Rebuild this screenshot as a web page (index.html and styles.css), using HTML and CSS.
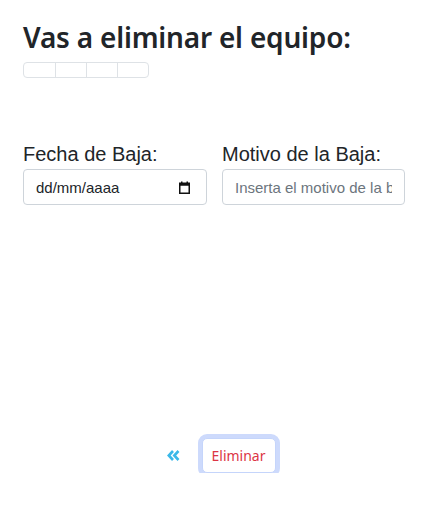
FILE: index.html
```html
<!DOCTYPE html>
<html lang="es">
<head>
<meta charset="utf-8">
<link rel="stylesheet" href="styles.css">
</head>
<body>
<main class="page">
  <h1 class="title">Vas a eliminar el equipo:</h1>
  <table class="equipo">
    <tr><td></td><td></td><td></td><td></td></tr>
  </table>
  <div class="fields">
    <div class="field field-date">
      <label class="label">Fecha de Baja:</label>
      <div class="input date-input">
        <span class="date-text">dd/mm/aaaa</span>
        <svg class="cal-icon" width="11" height="13" viewBox="0 0 11 13">
          <rect x="0.75" y="2.25" width="9.5" height="10" fill="none" stroke="#111" stroke-width="1.5"/>
          <rect x="0.75" y="2.25" width="9.5" height="2.5" fill="#111"/>
          <rect x="2" y="0.5" width="1.5" height="2.5" fill="#111"/>
          <rect x="7.5" y="0.5" width="1.5" height="2.5" fill="#111"/>
        </svg>
      </div>
    </div>
    <div class="field field-text">
      <label class="label">Motivo de la Baja:</label>
      <input class="input text-input" type="text" placeholder="Inserta el motivo de la baja">
    </div>
  </div>
  <div class="actions">
    <a class="back" href="#">
      <svg width="13" height="11" viewBox="0 0 13 11">
        <path d="M6 1 L1.8 5.5 L6 10 M11.5 1 L7.3 5.5 L11.5 10" fill="none" stroke="#3ab8e8" stroke-width="2.6"/>
      </svg>
    </a>
    <button class="btn-delete" type="button">Eliminar</button>
  </div>
</main>
</body>
</html>
```

FILE: styles.css
```css
* { box-sizing: border-box; }
html, body { margin: 0; padding: 0; background: #fff; }
body { font-family: "Noto Sans", "Open Sans", sans-serif; color: #212529; }
.page { padding: 0 23px; }
.title {
  margin: 19px 0 7px;
  font-size: 28px;
  line-height: 36px;
  font-weight: 600;
  letter-spacing: -0.2px;
  color: #212529;
}
.equipo {
  border-collapse: separate;
  border-spacing: 0;
  border: 1px solid #dee2e6;
  border-radius: 4px;
  height: 16px;
}
.equipo td {
  width: 31px;
  height: 14px;
  padding: 0;
  border-left: 1px solid #dee2e6;
}
.equipo td:first-child { border-left: none; }
.fields {
  display: flex;
  gap: 15px;
  margin-top: 64px;
}
.field { display: flex; flex-direction: column; }
.field-date { width: 184px; }
.field-text { width: 183px; }
.label {
  font-family: "Liberation Sans", Arial, sans-serif;
  font-size: 20px;
  line-height: 24px;
  color: #212529;
  margin-bottom: 3px;
  white-space: nowrap;
}
.input {
  height: 36px;
  width: 100%;
  border: 1px solid #ced4da;
  border-radius: 4px;
  padding: 0 12px;
  font-family: "Liberation Sans", Arial, sans-serif;
  font-size: 15px;
  color: #212529;
  background: #fff;
}
.date-input {
  display: flex;
  align-items: center;
  justify-content: space-between;
  padding-right: 16px;
}
.text-input::placeholder { color: #6c757d; }
.text-input { outline: none; }
.actions {
  display: flex;
  align-items: center;
  justify-content: center;
  gap: 22px;
  margin-top: 233px;
  padding-left: 1px;
}
.back { display: flex; align-items: center; text-decoration: none; }
.btn-delete {
  font-family: "Noto Sans", "Open Sans", sans-serif;
  font-size: 14px;
  line-height: 21px;
  height: 35px;
  padding: 0 9px;
  color: #dc3545;
  background: #fff;
  border: 1px solid #c5d5fb;
  border-radius: 5px;
  box-shadow: 0 0 0 4px #cddafc;
}
```
